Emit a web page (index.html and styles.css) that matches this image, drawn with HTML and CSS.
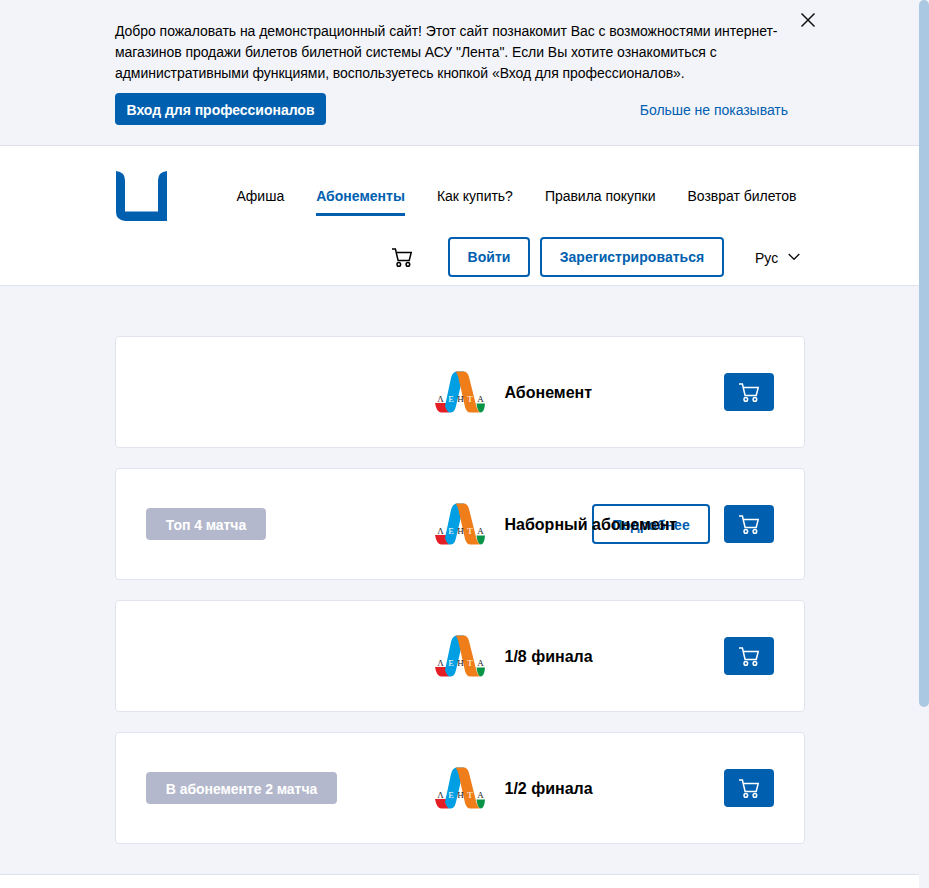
FILE: index.html
```html
<!DOCTYPE html>
<html lang="ru">
<head>
<meta charset="utf-8">
<title>Абонементы</title>
<link rel="stylesheet" href="styles.css">
</head>
<body>
<svg width="0" height="0" class="defs">
  <symbol id="cart" viewBox="0 0 20 19">
    <path d="M0 1H3.4L6.1 12.4H17.2L19.2 4.6H4.3" fill="none" stroke="currentColor" stroke-width="1.5"/>
    <circle cx="6.8" cy="16.4" r="1.8" fill="none" stroke="currentColor" stroke-width="1.5"/>
    <circle cx="15.9" cy="16.4" r="1.8" fill="none" stroke="currentColor" stroke-width="1.5"/>
  </symbol>
  <symbol id="lenta" viewBox="0 0 50 42">
    <path d="M0 32H11Q11.5 38 14 41.5H6Q1.500 41 0 32Z" fill="#e31e24"/>
    <path d="M41.5 32.5H50Q49.500 41.500 45.500 41.500Q42.500 41 41.500 32.500Z" fill="#089447"/>
    <path d="M10 35L16 7Q17.500 .5 22 .5H29L25 18L21 35Q19.500 41.500 16 41.500H14Q11.500 40 10 35Z" fill="#009fe3"/>
    <path d="M20.500 .5H29Q32.500 .5 34 6L41 34Q42.500 40 45 41.500H35.500Q31.500 41.500 30 36L23.500 7Q22.500 2.500 20.500 .5Z" fill="#ef7d1a"/>
  </symbol>
</svg>
<div class="page">
  <section class="banner">
    <div class="container banner-inner">
      <p class="banner-text">Добро пожаловать на демонстрационный сайт! Этот сайт познакомит Вас с возможностями интернет-магазинов продажи билетов билетной системы АСУ "Лента". Если Вы хотите ознакомиться с административными функциями, воспользуетесь кнопкой «Вход для профессионалов».</p>
      <div class="banner-actions">
        <a class="pro">Вход для профессионалов</a>
        <a class="hide">Больше не показывать</a>
      </div>
      <svg class="close" width="14" height="14" viewBox="0 0 14 14"><path d="M.5 .5L13.5 13.5M13.5 .5L.5 13.5" stroke="#111" stroke-width="1.5"/></svg>
    </div>
  </section>
  <header class="header">
    <div class="container">
      <div class="top">
        <svg class="logo" width="51" height="50" viewBox="0 0 51 50"><path d="M0 0Q9 1 9 9V40.5H42V9Q42 1 51 0V50H9Q0 49 0 41Z" fill="#0060af"/></svg>
        <nav class="nav">
          <a>Афиша</a><a class="active">Абонементы</a><a>Как купить?</a><a>Правила покупки</a><a>Возврат билетов</a>
        </nav>
      </div>
      <div class="tools">
        <svg class="cart" width="20" height="19"><use href="#cart"/></svg>
        <a class="btn login">Войти</a>
        <a class="btn register">Зарегистрироваться</a>
        <span class="lang">Рус</span>
        <svg class="chevron" width="12" height="8" viewBox="0 0 12 8"><path d="M.7 1L6 6.3L11.3 1" fill="none" stroke="#111" stroke-width="1.4"/></svg>
      </div>
    </div>
  </header>
  <main class="container list">
    <article class="card">
      <div class="label"></div>
      <svg class="lenta" width="50" height="42"><use href="#lenta"/><text x="5.500" y="31">Λ</text><text class="light" x="16" y="31">Е</text><text x="25.500" y="31">Н</text><text class="light" x="35" y="31">Т</text><text x="45.500" y="31">А</text></svg>
      <h3>Абонемент</h3>
      <div class="actions"><a class="buy"><svg width="20" height="19"><use href="#cart"/></svg></a></div>
    </article>
    <article class="card">
      <div class="label"><span class="tag">Топ 4 матча</span></div>
      <svg class="lenta" width="50" height="42"><use href="#lenta"/><text x="5.500" y="31">Λ</text><text class="light" x="16" y="31">Е</text><text x="25.500" y="31">Н</text><text class="light" x="35" y="31">Т</text><text x="45.500" y="31">А</text></svg>
      <h3>Наборный абонемент</h3>
      <div class="actions"><a class="btn more">Подробнее</a><a class="buy"><svg width="20" height="19"><use href="#cart"/></svg></a></div>
    </article>
    <article class="card">
      <div class="label"></div>
      <svg class="lenta" width="50" height="42"><use href="#lenta"/><text x="5.500" y="31">Λ</text><text class="light" x="16" y="31">Е</text><text x="25.500" y="31">Н</text><text class="light" x="35" y="31">Т</text><text x="45.500" y="31">А</text></svg>
      <h3>1/8 финала</h3>
      <div class="actions"><a class="buy"><svg width="20" height="19"><use href="#cart"/></svg></a></div>
    </article>
    <article class="card">
      <div class="label"><span class="tag wide">В абонементе 2 матча</span></div>
      <svg class="lenta" width="50" height="42"><use href="#lenta"/><text x="5.500" y="31">Λ</text><text class="light" x="16" y="31">Е</text><text x="25.500" y="31">Н</text><text class="light" x="35" y="31">Т</text><text x="45.500" y="31">А</text></svg>
      <h3>1/2 финала</h3>
      <div class="actions"><a class="buy"><svg width="20" height="19"><use href="#cart"/></svg></a></div>
    </article>
  </main>
  <footer class="footer"></footer>
</div>
<div class="scrollbar"><div class="thumb"></div></div>
</body>
</html>
```
FILE: styles.css
```css
* { box-sizing: border-box; }
body {
  margin: 0;
  display: flex;
  height: 888px;
  overflow: hidden;
  background: #f3f4fa;
  color: #000;
  font: 14px/21px "Liberation Sans", Arial, sans-serif;
}
.defs { position: absolute; }
svg { display: block; flex: none; }
.page { width: 919px; display: flex; flex-direction: column; }
.scrollbar { width: 10px; background: #f3f4fa; }
.thumb { height: 707px; border-radius: 5px; background: #abc8e3; }
.container { width: 690px; margin-left: 115px; }

.banner { height: 146px; flex: none; padding-top: 21px; border-bottom: 1px solid #e0e1ec; }
.banner-inner { position: relative; }
.banner-text { margin: 0; width: 673px; height: 72px; letter-spacing: -.05px; }
.banner-actions { display: flex; justify-content: space-between; width: 673px; }
.pro {
  width: 211px; height: 32px; border-radius: 4px;
  background: #0060af; color: #fff;
  font-weight: 700; line-height: 34px; text-align: center; letter-spacing: -.02px;
}
.hide { color: #0060af; line-height: 34px; letter-spacing: -.03px; }
.close { position: absolute; right: -10px; top: -8px; }

.header { height: 140px; flex: none; background: #fff; border-bottom: 1px solid #e1e4ee; }
.top { display: flex; padding: 25px 0 0 1px; height: 91px; }
.nav { display: flex; gap: 32px; margin-left: 69.4px; padding-top: 15px; white-space: nowrap; letter-spacing: -.02px; }
.nav a { height: 30px; }
.nav .active { color: #0060af; font-weight: 700; border-bottom: 3px solid #0060af; letter-spacing: .02px; }
.tools { display: flex; align-items: center; height: 40px; padding-left: 277px; }
.btn {
  height: 40px; border: 2px solid #0060af; border-radius: 4px;
  color: #0060af; font-weight: 700; line-height: 37px; text-align: center; letter-spacing: .04px;
}
.login { width: 82px; margin-left: 36px; }
.register { width: 184px; margin-left: 10px; }
.lang { margin: 2px 0 0 31px; width: 33px; }

.list { display: flex; flex-direction: column; gap: 20px; padding-top: 50px; height: 588px; flex: none; }
.card {
  display: flex; align-items: center;
  height: 112px; flex: none; padding: 0 30px;
  background: #fff; border: 1px solid #e1e4ee; border-radius: 4px;
}
.label { width: 289px; flex: none; }
.tag {
  display: block; width: 120px; height: 32px; border-radius: 4px;
  background: #b4b8cc; color: #fff; font-weight: 700; line-height: 34px; text-align: center;
  letter-spacing: -.06px;
}
.wide { width: 191px; }
.lenta text { font: 9px "Liberation Serif", serif; text-anchor: middle; fill: #222; }
.lenta .light { fill: #fff; }
.card h3 {
  position: relative; z-index: 1;
  margin: 1px 0 0 19.5px; width: 0;
  white-space: nowrap; font-size: 16px; line-height: 25px;
}
.actions { display: flex; align-items: center; gap: 14px; margin-left: auto; }
.more { width: 118px; line-height: 38px; }
.buy {
  display: flex; align-items: center; justify-content: center;
  width: 50px; height: 38px; border-radius: 4px; background: #0060af; color: #fff;
}
.footer { flex: 1; background: #fff; border-top: 1px solid #e0e3ee; }
```
